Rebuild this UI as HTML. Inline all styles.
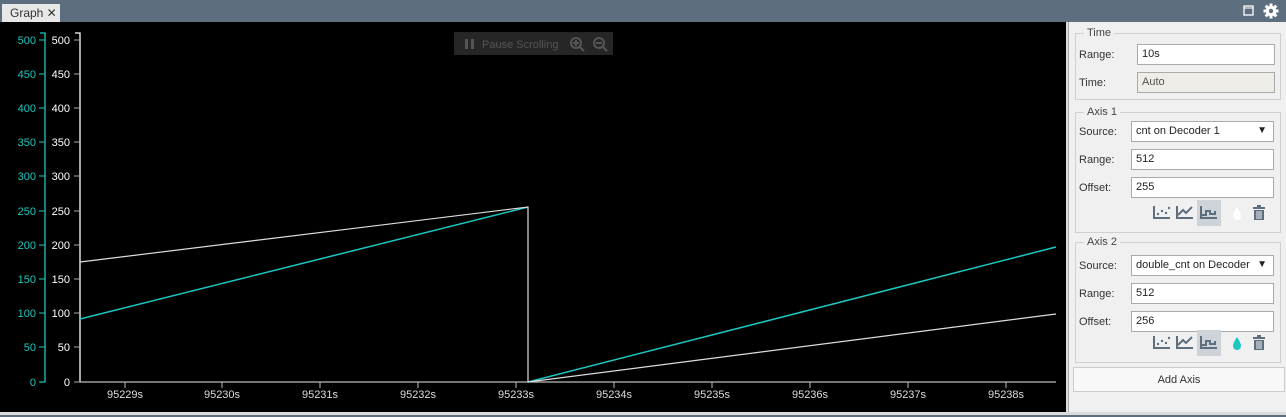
<!DOCTYPE html>
<html><head><style>
*{box-sizing:border-box;margin:0;padding:0}
body{width:1286px;height:417px;overflow:hidden;background:#dcdcdc;font-family:"Liberation Sans",sans-serif;position:relative}
.top{position:absolute;left:0;top:0;width:1286px;height:22px;background:#5d6e7e}
.tab{position:absolute;left:2px;top:4px;width:58px;height:18px;background:#e8e8e8;font-size:12px;color:#333;padding:2px 0 0 8px}
.chart{position:absolute;left:0;top:22px;width:1066px;height:390px;background:#000}
.panel{position:absolute;left:1068px;top:22px;width:218px;height:390px;background:#f0f0f0;border-left:1px solid #aaa}
fieldset{position:absolute;left:6px;width:206px;border:1px solid #d0d0d0;font-size:11px;color:#333}
legend{margin-left:8px;padding:0 3px;font-size:11px;color:#444}
.lbl{position:absolute;left:10px;font-size:11px;color:#333}
.inp{position:absolute;left:62px;width:143px;height:21px;background:#fff;border:1px solid #aaa;font-size:11px;padding:3px 0 0 4px;color:#222}
.btn{position:absolute;left:4px;top:345px;width:212px;height:25px;background:#f8f8f8;border:1px solid #ccc;font-size:11px;text-align:center;line-height:24px;color:#333}
.bottom{position:absolute;left:0;top:412px;width:1286px;height:5px;background:#dcdcdc;border-bottom:2px solid #5d6e7e}
</style></head><body>
<div class="top"><div class="tab">Graph ✕</div>
<svg style="position:absolute;left:1243px;top:5px" width="12" height="12"><rect x="1" y="1" width="9" height="9" fill="none" stroke="#fff" stroke-width="1.3"/><line x1="1" y1="3" x2="10" y2="3" stroke="#fff"/></svg>
<svg style="position:absolute;left:1263px;top:3px" width="16" height="16" viewBox="0 0 16 16"><g fill="#fff"><circle cx="8" cy="8" r="5.3"/><rect x="6.5" y="0.5" width="3" height="15"/><rect x="0.5" y="6.5" width="15" height="3"/><rect x="6.5" y="0.5" width="3" height="15" transform="rotate(45 8 8)"/><rect x="6.5" y="0.5" width="3" height="15" transform="rotate(-45 8 8)"/></g><circle cx="8" cy="8" r="2.2" fill="#5d6e7e"/></svg>
</div>
<div class="chart">
<svg width="1066" height="390" viewBox="0 22 1066 390" style="font-family:'Liberation Sans',sans-serif;font-size:11px">
<path d="M40 33H45V382H40" fill="none" stroke="#1cc7c0" stroke-width="1.3"/>
<path d="M75 33H80V382" fill="none" stroke="#fff" stroke-width="1.3"/>
<g fill="#1cc7c0" text-anchor="end">
<text x="36" y="44">500</text><text x="36" y="78">450</text><text x="36" y="112">400</text><text x="36" y="146">350</text><text x="36" y="180">300</text><text x="36" y="215">250</text><text x="36" y="249">200</text><text x="36" y="283">150</text><text x="36" y="317">100</text><text x="36" y="351">50</text><text x="36" y="386">0</text></g>
<g stroke="#1cc7c0"><path d="M39 40h6M39 74h6M39 108h6M39 142h6M39 176h6M39 211h6M39 245h6M39 279h6M39 313h6M39 347h6M39 382h6"/></g>
<g fill="#fff" text-anchor="end">
<text x="70" y="44">500</text><text x="70" y="78">450</text><text x="70" y="112">400</text><text x="70" y="146">350</text><text x="70" y="180">300</text><text x="70" y="215">250</text><text x="70" y="249">200</text><text x="70" y="283">150</text><text x="70" y="317">100</text><text x="70" y="351">50</text><text x="70" y="386">0</text></g>
<g stroke="#aaa"><path d="M74 40h6M74 74h6M74 108h6M74 142h6M74 176h6M74 211h6M74 245h6M74 279h6M74 313h6M74 347h6M74 382h6"/></g>
<path d="M80 382H1056" stroke="#bbb" stroke-width="1.3"/>
<g stroke="#bbb"><path d="M125 382v6M222 382v6M320 382v6M418 382v6M516 382v6M614 382v6M712 382v6M810 382v6M908 382v6M1006 382v6"/></g>
<g fill="#ddd" text-anchor="middle"><text x="125" y="398">95229s</text><text x="222" y="398">95230s</text><text x="320" y="398">95231s</text><text x="418" y="398">95232s</text><text x="516" y="398">95233s</text><text x="614" y="398">95234s</text><text x="712" y="398">95235s</text><text x="810" y="398">95236s</text><text x="908" y="398">95237s</text><text x="1006" y="398">95238s</text></g>
<path d="M80 319L528 207" fill="none" stroke="#1cc7c0" stroke-width="1.5"/>
<path d="M528 382L1056 247" fill="none" stroke="#1cc7c0" stroke-width="1.5"/>
<path d="M80 262L528 207V382L1056 314" fill="none" stroke="#ddd" stroke-width="1.2"/>
<rect x="454" y="32" width="159" height="23" fill="#262626"/>
<rect x="465" y="39" width="3" height="10" fill="#555"/><rect x="471" y="39" width="3" height="10" fill="#555"/>
<text x="482" y="48" fill="#555">Pause Scrolling</text>
<g fill="none" stroke="#555" stroke-width="2"><circle cx="576" cy="43" r="5"/><path d="M580 47l4 4M573 43h6M576 40v6"/><circle cx="599" cy="43" r="5"/><path d="M603 47l4 4M596 43h6"/></g>
</svg></div>
<div class="panel">
<fieldset style="top:5px;height:73px"><legend>Time</legend></fieldset>
<div class="lbl" style="top:27px">Range:</div><div class="inp" style="top:22px;left:68px;width:138px">10s</div>
<div class="lbl" style="top:55px">Time:</div><div class="inp" style="top:50px;left:68px;width:138px;background:#eeede8;color:#555">Auto</div>
<fieldset style="top:84px;height:127px"><legend>Axis 1</legend></fieldset>
<div class="lbl" style="top:104px">Source:</div><div class="inp" style="top:99px">cnt on Decoder 1<span style="position:absolute;right:6px;font-size:10px">▼</span></div>
<div class="lbl" style="top:132px">Range:</div><div class="inp" style="top:127px">512</div>
<div class="lbl" style="top:160px">Offset:</div><div class="inp" style="top:155px">255</div>
<fieldset style="top:214px;height:127px"><legend>Axis 2</legend></fieldset>
<div class="lbl" style="top:238px">Source:</div><div class="inp" style="top:233px">double_cnt on Decoder<span style="position:absolute;right:6px;font-size:10px">▼</span></div>
<div class="lbl" style="top:266px">Range:</div><div class="inp" style="top:261px">512</div>
<div class="lbl" style="top:294px">Offset:</div><div class="inp" style="top:289px">256</div>
<svg style="position:absolute;left:80px;top:178px" width="130" height="26"><g fill="none" stroke="#5d6e7e" stroke-width="2">
<path d="M5 6v12h16"/><path d="M28 6v12h16M29 15l5-5 3 3 6-6"/><rect x="48" y="0" width="24" height="26" fill="#cdd3d8" stroke="none"/><path d="M52 6v12h16M53 15h4v-4h4v3h5v-3"/></g>
<g fill="#5d6e7e"><circle cx="9" cy="14" r="1.2"/><circle cx="13" cy="11" r="1.2"/><circle cx="17" cy="13" r="1.2"/><circle cx="20" cy="8" r="1.2"/>
<path d="M104 7h12v2h-12zM108 5h4v2h-4zM105 10h10v10h-10z"/></g>
<path d="M88 7q-4 6-4 9a4 4 0 0 0 8 0q0-3-4-9z" fill="#fff"/>
<g stroke="#f0f0f0" stroke-width="1"><path d="M108 11v8M110 11v8M112 11v8"/></g></svg>
<svg style="position:absolute;left:80px;top:308px" width="130" height="26"><g fill="none" stroke="#5d6e7e" stroke-width="2">
<path d="M5 6v12h16"/><path d="M28 6v12h16M29 15l5-5 3 3 6-6"/><rect x="48" y="0" width="24" height="26" fill="#cdd3d8" stroke="none"/><path d="M52 6v12h16M53 15h4v-4h4v3h5v-3"/></g>
<g fill="#5d6e7e"><circle cx="9" cy="14" r="1.2"/><circle cx="13" cy="11" r="1.2"/><circle cx="17" cy="13" r="1.2"/><circle cx="20" cy="8" r="1.2"/>
<path d="M104 7h12v2h-12zM108 5h4v2h-4zM105 10h10v10h-10z"/></g>
<path d="M88 7q-4 6-4 9a4 4 0 0 0 8 0q0-3-4-9z" fill="#1cc7c0"/>
<g stroke="#f0f0f0" stroke-width="1"><path d="M108 11v8M110 11v8M112 11v8"/></g></svg>
<div class="btn">Add Axis</div>
</div>
<div class="bottom"></div>
</body></html>
